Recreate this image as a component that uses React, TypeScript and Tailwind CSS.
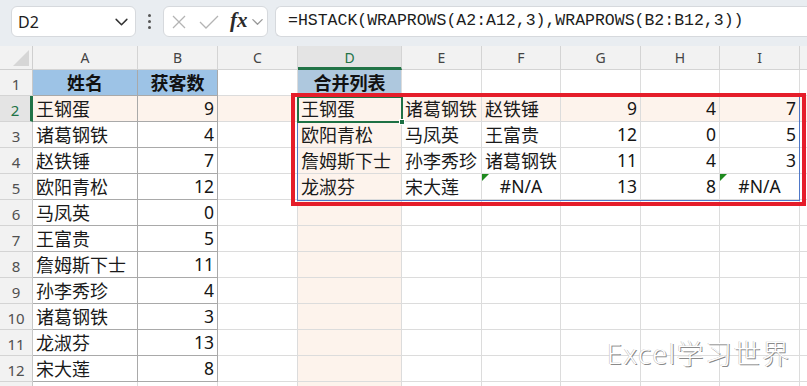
import React from "react";

const COLS = ["", "A", "B", "C", "D", "E", "F", "G", "H", "I", ""];

const colA = ["姓名", "王钢蛋", "诸葛钢铁", "赵铁锤", "欧阳青松", "马凤英", "王富贵", "詹姆斯下士", "孙李秀珍", "诸葛钢铁", "龙淑芬", "宋大莲", ""];
const colB = ["获客数", "9", "4", "7", "12", "0", "5", "11", "4", "3", "13", "8", ""];

const spill: string[][] = [
  ["王钢蛋", "诸葛钢铁", "赵铁锤", "9", "4", "7"],
  ["欧阳青松", "马凤英", "王富贵", "12", "0", "5"],
  ["詹姆斯下士", "孙李秀珍", "诸葛钢铁", "11", "4", "3"],
  ["龙淑芬", "宋大莲", "#N/A", "13", "8", "#N/A"],
];

type Cell = { text: string; align: "left" | "right" | "center"; bold?: boolean; bg: string; dark?: boolean };

function getCell(row: number, col: number): Cell {
  let text = "";
  let align: Cell["align"] = "left";
  let bold = false;
  let dark = false;
  let bg = "white";
  if (col === 1) {
    text = colA[row - 1];
    dark = row <= 12;
    if (row === 1) {
      align = "center";
      bold = true;
    }
  } else if (col === 2) {
    text = colB[row - 1];
    dark = row <= 12;
    align = row === 1 ? "center" : "right";
    if (row === 1) bold = true;
  } else if (col === 4 && row === 1) {
    text = "合并列表";
    align = "center";
    bold = true;
  } else if (col >= 4 && col <= 9 && row >= 2 && row <= 5) {
    text = spill[row - 2][col - 4];
    align = col >= 7 ? "right" : "left";
    if (text === "#N/A") align = "center";
  }
  if (row === 1 && (col === 1 || col === 2)) bg = "blue";
  else if (row === 1 && col === 4) bg = "bluegray";
  else if (row === 2 || col === 4) bg = "peach";
  return { text, align, bold, bg, dark };
}

function Chevron({ className }: { className?: string }) {
  return (
    <svg width="14" height="14" viewBox="0 0 14 14" className={className}>
      <polyline points="2,5 7,10 12,5" fill="none" stroke="currentColor" strokeWidth="1.4" strokeLinecap="round" strokeLinejoin="round" />
    </svg>
  );
}

function Toolbar() {
  return (
    <div className="h-[46px] bg-[#e9edf1] flex items-start pt-[6px] pl-[11px] gap-0">
      <div className="w-[125px] h-[31px] bg-white rounded-[6px] border border-[#d6d9dd] flex items-center justify-between pl-[6px] pr-[6px]">
        <span className="text-[16px] text-[#202020] [font-family:'Noto_Sans',sans-serif]">D2</span>
        <Chevron className="text-[#333] w-[15px] h-[15px]" />
      </div>
      <div className="w-[27px] h-[31px] flex flex-col items-center justify-center gap-[3px]">
        <div className="w-[3px] h-[3px] rounded-full bg-[#555]" />
        <div className="w-[3px] h-[3px] rounded-full bg-[#555]" />
        <div className="w-[3px] h-[3px] rounded-full bg-[#555]" />
      </div>
      <div className="w-[105px] h-[31px] bg-white rounded-[6px] border border-[#d6d9dd] flex items-center pl-[6px]">
        <svg width="18" height="18" viewBox="0 0 18 18" className="text-[#b4b4b4]">
          <line x1="3" y1="3" x2="15" y2="15" stroke="currentColor" strokeWidth="1.3" />
          <line x1="15" y1="3" x2="3" y2="15" stroke="currentColor" strokeWidth="1.3" />
        </svg>
        <svg width="22" height="18" viewBox="0 0 22 18" className="text-[#b4b4b4] ml-[10px]">
          <polyline points="2,9 8,15 20,3" fill="none" stroke="currentColor" strokeWidth="1.3" />
        </svg>
        <span className="ml-[10px] text-[21px] italic font-bold text-[#2a2a2a] leading-none [font-family:'Liberation_Serif',serif] mt-[-3px]">fx</span>
        <Chevron className="text-[#9a9a9a] ml-[3px] w-[13px] h-[13px]" />
      </div>
      <div className="ml-[7px] flex-1 h-[31px] bg-white rounded-l-[6px] border border-r-0 border-[#d6d9dd] flex items-center pl-[12px]">
        <span className="text-[16.5px] text-[#1c1c1c] [font-family:'Liberation_Mono',monospace] whitespace-nowrap">=HSTACK(WRAPROWS(A2:A12,3),WRAPROWS(B2:B12,3))</span>
      </div>
    </div>
  );
}

function Grid() {
  const rows = Array.from({ length: 13 }, (_, i) => i + 1);
  const cols = Array.from({ length: 10 }, (_, i) => i + 1);
  return (
    <div className="grid grid-cols-[33px_105px_80px_80px_104px_80px_79px_80px_79px_80px_20px] [font-family:'Noto_Sans','Noto_Sans_CJK_SC',sans-serif]">
      {COLS.map((c, i) => {
        if (i === 0) {
          return (
            <div key="corner" className="h-[24px] bg-[#f2f2f2] border-r border-b border-[#cfcfcf] relative">
              <svg width="16" height="16" viewBox="0 0 16 16" className="absolute right-[3px] bottom-[3px]">
                <polygon points="16,0 16,16 0,16" fill="#d6d6d6" />
              </svg>
            </div>
          );
        }
        if (c === "D") {
          return (
            <div key={"h" + i} className="h-[24px] bg-[#e4e4e4] border-r border-[#d4d4d4] border-b-[3px] border-b-[#217346] flex items-center justify-center text-[14px] text-[#217346] pt-[2px]">
              {c}
            </div>
          );
        }
        return (
          <div key={"h" + i} className="h-[24px] bg-[#f2f2f2] border-r border-b border-[#d4d4d4] flex items-center justify-center text-[14px] text-[#444]">
            {c}
          </div>
        );
      })}
      {rows.map((r) => (
        <React.Fragment key={"r" + r}>
          {r === 2 ? (
            <div className="h-[26px] bg-[#e4e4e4] border-b border-[#d4d4d4] border-r-[3px] border-r-[#217346] flex items-center justify-center pt-[3px] text-[15px] text-[#217346]">
              {r}
            </div>
          ) : (
            <div className="h-[26px] bg-[#f2f2f2] border-b border-r border-[#d4d4d4] border-r-[#c8c8c8] flex items-center justify-center pt-[3px] text-[15px] text-[#505050]">
              {r <= 12 ? r : ""}
            </div>
          )}
          {cols.map((c) => {
            const cell = getCell(r, c);
            const bgClass =
              cell.bg === "blue"
                ? "bg-[#9dc3e6]"
                : cell.bg === "bluegray"
                ? "bg-[#aec8de]"
                : cell.bg === "peach"
                ? "bg-[#fdf3ec]"
                : "bg-white";
            const borderClass = cell.dark ? "border-[#a9a9a9]" : "border-[#dcdcdc]";
            const alignClass =
              cell.align === "right" ? "justify-end pr-[3px]" : cell.align === "center" ? "justify-center" : "justify-start pl-[3px]";
            const isNum = /^[0-9#]/.test(cell.text);
            const textClass = cell.bold
              ? "text-[18px] font-bold text-[#111]"
              : isNum
              ? "text-[17.5px] text-[#151515]"
              : "text-[18px] text-[#1a1a1a]";
            return (
              <div
                key={"c" + r + "-" + c}
                className={`h-[26px] border-r border-b ${borderClass} ${bgClass} flex items-center ${alignClass} ${textClass} whitespace-nowrap overflow-hidden leading-none`}
              >
                {cell.text}
              </div>
            );
          })}
        </React.Fragment>
      ))}
    </div>
  );
}

export default function App() {
  return (
    <div className="relative w-[807px] h-[386px] overflow-hidden bg-white">
      <Toolbar />
      <Grid />
      <div className="absolute left-[297px] top-[96px] w-[503px] h-[105px] border border-[#4f78c8] pointer-events-none" />
      <div className="absolute left-[297px] top-[96px] w-[106px] h-[27px] border-[2.5px] border-[#1e7145] pointer-events-none">
        <div className="absolute right-[-4px] bottom-[-4px] w-[6px] h-[6px] bg-[#1e7145] border border-white" />
      </div>
      <svg width="7" height="7" viewBox="0 0 7 7" className="absolute left-[482px] top-[174px]">
        <polygon points="0,0 7,0 0,7" fill="#1e8a1e" />
      </svg>
      <svg width="7" height="7" viewBox="0 0 7 7" className="absolute left-[720px] top-[174px]">
        <polygon points="0,0 7,0 0,7" fill="#1e8a1e" />
      </svg>
      <div className="absolute left-[291px] top-[93px] w-[515px] h-[113px] border-4 border-[#e51d2a] pointer-events-none" />
      <div className="absolute left-[607px] top-[340px] text-[27px] tracking-[1.5px] font-light text-white leading-none [font-family:'Noto_Sans','Noto_Sans_CJK_SC',sans-serif] [text-shadow:1px_1px_0_#8a8a8a,-0.5px_-0.5px_0_#bdbdbd]">
        Excel学习世界
      </div>
    </div>
  );
}
